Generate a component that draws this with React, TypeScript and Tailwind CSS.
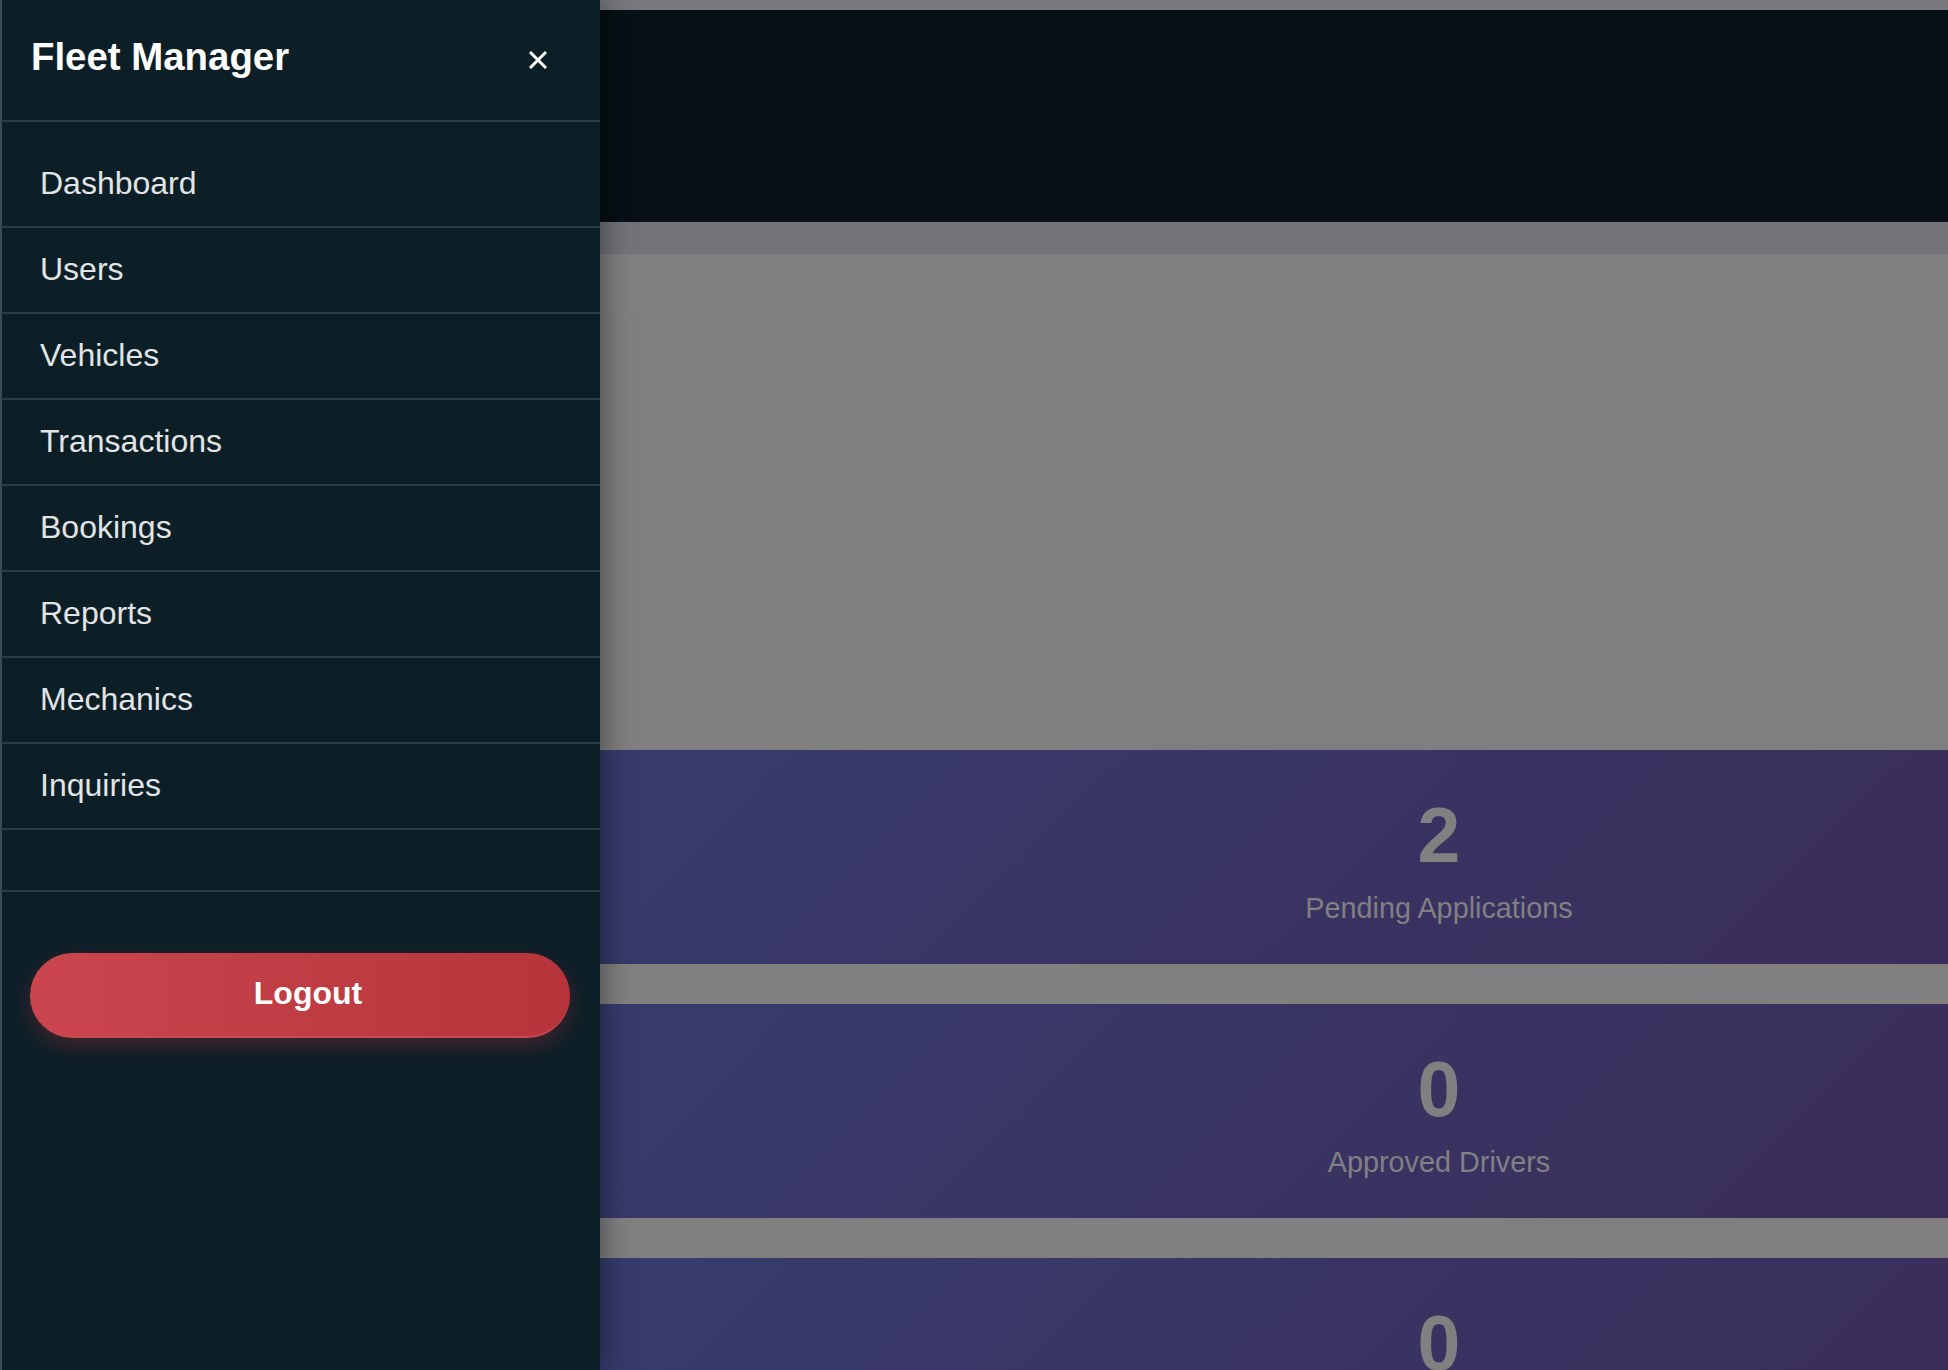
import React from 'react';

const navItems = [
  'Dashboard',
  'Users',
  'Vehicles',
  'Transactions',
  'Bookings',
  'Reports',
  'Mechanics',
  'Inquiries',
];

const stats = [
  { value: 2, label: 'Pending Applications' },
  { value: 0, label: 'Approved Drivers' },
  { value: 0, label: 'Active Vehicles' },
];

function CloseIcon() {
  return (
    <svg width="20" height="20" viewBox="0 0 20 20" fill="none">
      <path d="M2 2 L18 18 M18 2 L2 18" stroke="#ffffff" strokeWidth="3" />
    </svg>
  );
}

function StatCard({ value, label }: { value: number; label: string }) {
  return (
    <div className="h-[214px] shrink-0 bg-linear-135 from-[#373b6c] to-[#3a2d59] pl-[330px] pt-[47px] flex flex-col items-center">
      <div className="text-[77px] leading-none font-bold text-[#808080]">{value}</div>
      <div className="mt-[20px] text-[28.8px] leading-none text-[#808085]">{label}</div>
    </div>
  );
}

export default function App() {
  return (
    <div
      className="h-screen w-full overflow-hidden flex bg-[#808080]"
      style={{ fontFamily: '"Liberation Sans", Arial, sans-serif' }}
    >
      {/* Sidebar */}
      <aside className="relative z-10 w-[600px] shrink-0 h-full bg-[#0c1f27] border-l-2 border-[#3a4b51] shadow-[6px_0_24px_rgba(0,0,0,0.35)] flex flex-col">
        <div className="h-[122px] shrink-0 border-b-2 border-[#2b3e45] flex items-center justify-between pl-[29px] pr-[52px]">
          <h1 className="-mt-[6px] text-[38.4px] leading-none font-bold text-white">Fleet Manager</h1>
          <button className="w-[20px] h-[20px] flex items-center justify-center">
            <CloseIcon />
          </button>
        </div>

        <nav className="pt-[20px] pb-[60px]">
          {navItems.map((item) => (
            <div
              key={item}
              className="h-[86px] border-b-2 border-[#2b3e45] flex items-center pl-[38px] pb-[2px] text-[32px] text-[#e2e4e5]"
            >
              {item}
            </div>
          ))}
        </nav>

        <div className="border-t-2 border-[#2b3e45] pl-[28px] pr-[30px] pt-[61px]">
          <button className="w-full h-[85px] rounded-full bg-linear-to-r from-[#ca454d] to-[#b7343b] border-b-2 border-[#c94a51] shadow-[0_8px_22px_rgba(200,50,60,0.3)] pl-[16px] pb-[4px] text-white text-[32px] font-bold">
            Logout
          </button>
        </div>
      </aside>

      {/* Dimmed main content */}
      <main className="flex-1 min-w-0 h-full flex flex-col">
        <div className="h-[10px] shrink-0 bg-[#77787c]" />
        <div className="h-[212px] shrink-0 bg-[#071015]" />
        <div className="h-[32px] shrink-0 bg-[#717378]" />
        <div className="h-[496px] shrink-0 flex flex-col">
          <div className="h-[63px] border-b border-[#7b7b7b] bg-[#808080]" />
          <div className="flex-1 bg-[#7f7f7f]" />
        </div>
        <div className="flex flex-col gap-[40px]">
          {stats.map((s, i) => (
            <StatCard key={i} value={s.value} label={s.label} />
          ))}
        </div>
      </main>
    </div>
  );
}
